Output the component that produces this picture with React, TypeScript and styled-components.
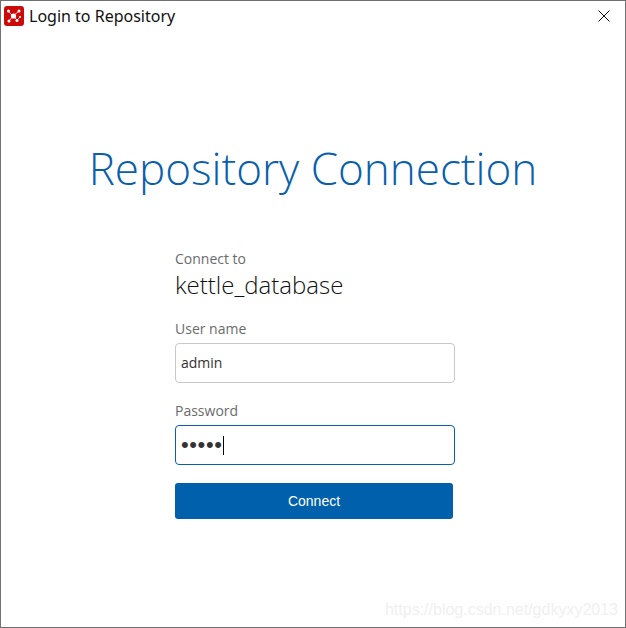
import React from 'react';
import styled, { createGlobalStyle } from 'styled-components';

const GlobalStyle = createGlobalStyle`
  html, body {
    margin: 0;
    padding: 0;
    background: #fff;
  }
`;

const Window = styled.div`
  position: relative;
  box-sizing: border-box;
  width: 626px;
  height: 628px;
  border: 1px solid #707070;
  background: #fff;
  font-family: "Open Sans", "Noto Sans", sans-serif;
`;

const TitleBar = styled.div`
  display: flex;
  align-items: center;
  justify-content: space-between;
  height: 30px;
  padding: 0 15px 0 3px;
`;

const TitleGroup = styled.div`
  display: flex;
  align-items: center;
  gap: 5px;
`;

const WindowTitle = styled.span`
  font-family: "Noto Sans", sans-serif;
  font-size: 16px;
  line-height: 30px;
  color: #111;
`;

const Heading = styled.h1`
  margin: 112px 0 0;
  font-size: 44px;
  line-height: 50px;
  font-weight: 300;
  color: #0a5fac;
  text-align: center;
`;

const Form = styled.div`
  display: flex;
  flex-direction: column;
  width: 280px;
  margin: 56px 0 0 174px;
`;

const Label = styled.div`
  font-size: 14px;
  line-height: 20px;
  color: #6b6b6b;
`;

const RepoName = styled.div`
  margin: 0 0 18px;
  font-size: 24px;
  line-height: 32px;
  font-weight: 300;
  color: #111;
`;

const Field = styled.div<{ $focused?: boolean }>`
  display: flex;
  align-items: center;
  box-sizing: border-box;
  width: 280px;
  height: 40px;
  margin: 4px 0 18px;
  padding: 0 5px;
  border: 1px solid ${p => (p.$focused ? '#0a5fac' : '#c8c8c8')};
  border-radius: 4px;
`;

const FieldText = styled.span`
  margin-bottom: 2px;
  font-size: 14px;
  color: #333;
`;

const Dots = styled.span`
  font-family: "Liberation Sans", sans-serif;
  font-size: 22px;
  line-height: 24px;
  letter-spacing: 0.6px;
  color: #333;
`;

const Caret = styled.span`
  width: 1px;
  height: 19px;
  background: #000;
`;

const ConnectButton = styled.button`
  width: 278px;
  height: 36px;
  padding: 0;
  border: 0;
  border-radius: 3px;
  background: #0060ab;
  color: #fff;
  font-family: "Liberation Sans", sans-serif;
  font-size: 14px;
`;

const Watermark = styled.div`
  position: absolute;
  right: 7px;
  bottom: 8px;
  font-family: "Liberation Sans", sans-serif;
  font-size: 16px;
  line-height: 18px;
  color: #f0f0f0;
`;

const AppIcon = () => (
  <svg width="20" height="20" viewBox="0 0 20 20">
    <rect width="20" height="20" rx="3" fill="#cc0a0a" />
    <path
      d="M9 10 4 5M9 10 15 5M9 10 5 15M9 10 13 14M13 14 16 11"
      stroke="#f7c4c4"
      strokeWidth="1"
    />
    <g fill="#fff">
      <circle cx="9.5" cy="10" r="2.6" />
      <circle cx="4.5" cy="5" r="1.5" />
      <circle cx="15" cy="5" r="1.5" />
      <circle cx="5" cy="15" r="1.5" />
      <circle cx="13" cy="14.5" r="1.5" />
      <circle cx="16" cy="11" r="1" />
    </g>
  </svg>
);

const CloseIcon = () => (
  <svg width="12" height="12" viewBox="0 0 12 12">
    <path d="M0.5 0.5 11.5 11.5M11.5 0.5 0.5 11.5" stroke="#111" strokeWidth="1" />
  </svg>
);

const App = () => {
  return (
    <>
      <GlobalStyle />
      <Window>
        <TitleBar>
          <TitleGroup>
            <AppIcon />
            <WindowTitle>Login to Repository</WindowTitle>
          </TitleGroup>
          <CloseIcon />
        </TitleBar>
        <Heading>Repository Connection</Heading>
        <Form>
          <Label>Connect to</Label>
          <RepoName>kettle_database</RepoName>
          <Label>User name</Label>
          <Field>
            <FieldText>admin</FieldText>
          </Field>
          <Label>Password</Label>
          <Field $focused>
            <Dots>•••••</Dots>
            <Caret />
          </Field>
          <ConnectButton>Connect</ConnectButton>
        </Form>
        <Watermark>https://blog.csdn.net/gdkyxy2013</Watermark>
      </Window>
    </>
  );
};

export default App;
